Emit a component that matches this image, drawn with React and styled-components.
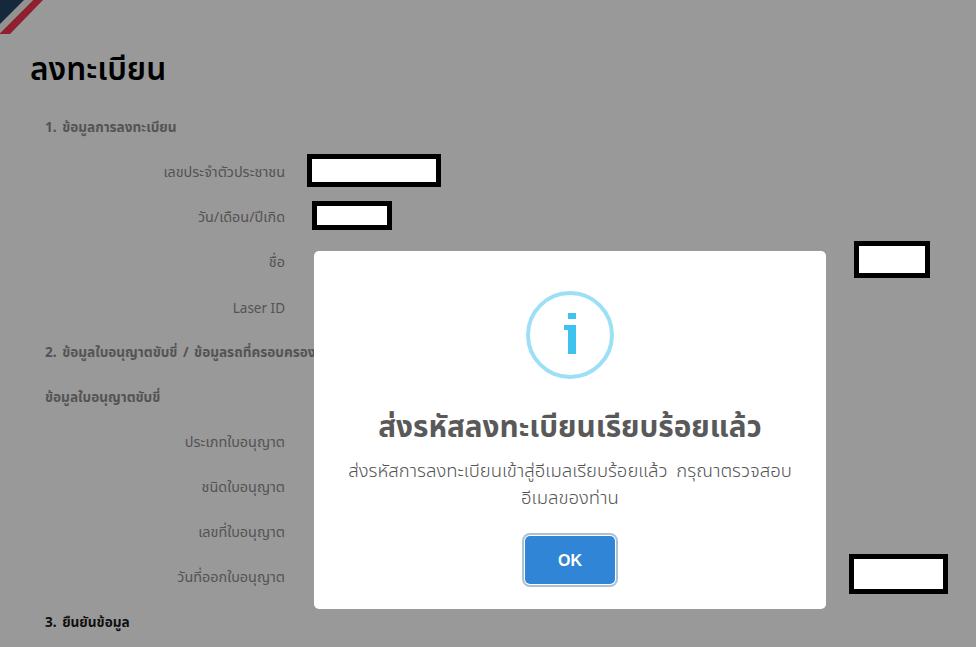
import React from 'react'
import styled, { createGlobalStyle } from 'styled-components'

const GlobalStyle = createGlobalStyle`
  html, body {
    margin: 0;
    padding: 0;
    height: 100%;
    overflow: hidden;
    background: #fff;
  }
  body {
    font-family: "Noto Sans", "Noto Sans Thai", "Open Sans", sans-serif;
  }
`

const Page = styled.div`
  height: 647px;
  width: 976px;
  overflow: hidden;
  position: relative;
`
const Corner = styled.svg`
  display: block;
  position: absolute;
  top: 0;
  left: 0;
`
const Content = styled.main`
  padding: 46px 0 0 30px;
`
const Title = styled.h1`
  margin: 0 0 15px;
  height: 44px;
  line-height: 44px;
  font-size: 31.6px;
  font-weight: 600;
  color: #000;
`
const Row = styled.div`
  display: flex;
  align-items: center;
  height: 45px;
`
const Section = styled(Row)`
  padding-left: 15px;
  font-size: 13.6px;
  font-weight: 700;
  word-spacing: 2px;
  color: ${p => (p.$dark ? '#1a1a1a' : '#8c8c8c')};
  white-space: nowrap;
`
const Label = styled.label`
  width: 255px;
  flex: none;
  text-align: right;
  font-size: ${p => (p.$latin ? 13.5 : 14.4)}px;
  color: #8c8c8c;
`
// black-framed blocks painted over the screenshot, they sit above the backdrop too
const Redacted = styled.div`
  position: relative;
  z-index: 2;
  flex: none;
  box-sizing: border-box;
  margin-left: ${p => p.$left}px;
  margin-top: ${p => p.$top || 0}px;
  width: ${p => p.$w}px;
  height: ${p => p.$h}px;
  background: #fff;
  border: 5px solid #000;
`
const Backdrop = styled.div`
  position: absolute;
  inset: 0;
  background: rgba(0, 0, 0, 0.4);
  display: flex;
  justify-content: center;
  align-items: flex-start;
  padding: 251px 0 0 164px;
  box-sizing: border-box;
`
const Modal = styled.div`
  width: 512px;
  height: 358px;
  box-sizing: border-box;
  padding-top: 40px;
  background: #fff;
  border-radius: 5px;
  display: flex;
  flex-direction: column;
  align-items: center;
`
const InfoIcon = styled.svg`
  display: block;
  flex: none;
`
const ModalTitle = styled.h2`
  margin: 27px 0 0;
  height: 40px;
  line-height: 40px;
  font-size: 29.7px;
  font-weight: 700;
  color: #595959;
  text-align: center;
  white-space: nowrap;
`
const ModalText = styled.p`
  margin: 10px 0 0;
  width: 460px;
  font-size: 18.5px;
  font-weight: 300;
  word-spacing: 4px;
  line-height: 27px;
  color: #545454;
  text-align: center;
`
const OkButton = styled.button`
  margin-top: 26px;
  width: 90px;
  height: 48px;
  padding: 1px 0 0;
  border: none;
  border-radius: 5px;
  background: #3085d6;
  color: #fff;
  font-family: "Liberation Sans", Arial, sans-serif;
  font-size: 16px;
  font-weight: 700;
  box-shadow: 0 0 0 1px #fff, 0 0 0 3px rgba(50, 100, 150, 0.4);
`

const rows1 = ['เลขประจำตัวประชาชน', 'วัน/เดือน/ปีเกิด', 'ชื่อ', 'Laser ID']
const rows2 = ['ประเภทใบอนุญาต', 'ชนิดใบอนุญาต', 'เลขที่ใบอนุญาต', 'วันที่ออกใบอนุญาต']

const boxes = {
  'เลขประจำตัวประชาชน': { $left: 22, $w: 134, $h: 33, $top: -5 },
  'วัน/เดือน/ปีเกิด': { $left: 27, $w: 80, $h: 29, $top: -5 },
  'ชื่อ': { $left: 569, $w: 76, $h: 37, $top: -6 },
  'วันที่ออกใบอนุญาต': { $left: 564, $w: 99, $h: 40, $top: -7 },
}

function Field({ label }) {
  const box = boxes[label]
  return (
    <Row>
      <Label $latin={label === 'Laser ID'}>{label}</Label>
      {box && <Redacted {...box} />}
    </Row>
  )
}

export default function App() {
  return (
    <Page>
      <GlobalStyle />
      <Corner width="44" height="34" viewBox="0 0 44 34">
        <polygon points="33,0 43,0 10,34 0,34 0,33" fill="#ee364f" />
        <polygon points="24,0 33,0 0,33 0,24" fill="#f4f4f4" />
        <polygon points="0,0 24,0 0,24" fill="#234364" />
      </Corner>
      <Content>
        <Title>ลงทะเบียน</Title>
        <Section>1. ข้อมูลการลงทะเบียน</Section>
        {rows1.map(l => <Field key={l} label={l} />)}
        <Section>2. ข้อมูลใบอนุญาตขับขี่ / ข้อมูลรถที่ครอบครอง</Section>
        <Section>ข้อมูลใบอนุญาตขับขี่</Section>
        {rows2.map(l => <Field key={l} label={l} />)}
        <Section $dark>3. ยืนยันข้อมูล</Section>
      </Content>
      <Backdrop>
        <Modal>
          <InfoIcon width="88" height="88" viewBox="0 0 88 88">
            <circle cx="44" cy="44" r="42" fill="none" stroke="#9de0f6" strokeWidth="4" />
            <path d="M42 22h8v6h-8zM38 34h12v29h-8v-24h-4z" fill="#3fc3ee" />
          </InfoIcon>
          <ModalTitle>ส่งรหัสลงทะเบียนเรียบร้อยแล้ว</ModalTitle>
          <ModalText>ส่งรหัสการลงทะเบียนเข้าสู่อีเมลเรียบร้อยแล้ว กรุณาตรวจสอบอีเมลของท่าน</ModalText>
          <OkButton>OK</OkButton>
        </Modal>
      </Backdrop>
    </Page>
  )
}
